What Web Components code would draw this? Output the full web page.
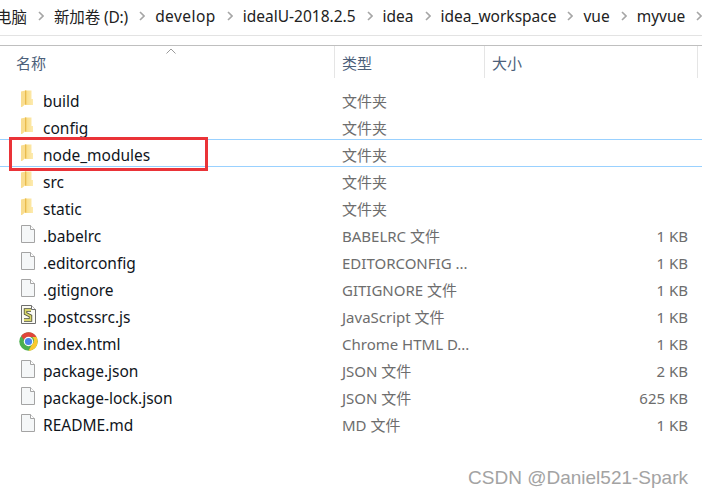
<!DOCTYPE html>
<html lang="zh">
<head>
<meta charset="utf-8">
<title>myvue</title>
<style>
  html, body { margin: 0; background: #fff; }
  body { width: 702px; height: 498px; overflow: hidden; position: relative; font-family: "Noto Sans", "Noto Sans CJK SC", sans-serif; }
</style>
</head>
<body>
<explorer-window>
  <path-bar slot="path">
    <path-crumb class="first">电脑</path-crumb>
    <path-crumb class="tight">新加卷 (D:)</path-crumb>
    <path-crumb class="wide">develop</path-crumb>
    <path-crumb>idealU-2018.2.5</path-crumb>
    <path-crumb>idea</path-crumb>
    <path-crumb>idea_workspace</path-crumb>
    <path-crumb>vue</path-crumb>
    <path-crumb>myvue</path-crumb>
  </path-bar>
  <list-header slot="header"></list-header>
  <file-row icon="folder" type="文件夹">build</file-row>
  <file-row icon="folder" type="文件夹">config</file-row>
  <file-row icon="folder" type="文件夹" focused>node_modules</file-row>
  <file-row icon="folder" type="文件夹">src</file-row>
  <file-row icon="folder" type="文件夹">static</file-row>
  <file-row icon="file" type="BABELRC 文件" size="1 KB">.babelrc</file-row>
  <file-row icon="file" type="EDITORCONFIG ..." size="1 KB">.editorconfig</file-row>
  <file-row icon="file" type="GITIGNORE 文件" size="1 KB">.gitignore</file-row>
  <file-row icon="script" type="JavaScript 文件" size="1 KB">.postcssrc.js</file-row>
  <file-row icon="chrome" type="Chrome HTML D..." size="1 KB">index.html</file-row>
  <file-row icon="file" type="JSON 文件" size="2 KB">package.json</file-row>
  <file-row icon="file" type="JSON 文件" size="625 KB">package-lock.json</file-row>
  <file-row icon="file" type="MD 文件" size="1 KB">README.md</file-row>
</explorer-window>
<red-mark></red-mark>
<water-mark>CSDN @Daniel521-Spark</water-mark>

<script>
const FONT = '"Noto Sans", "Noto Sans CJK SC", sans-serif';

class ExplorerWindow extends HTMLElement {
  connectedCallback() {
    this.attachShadow({ mode: 'open' });
    this.shadowRoot.innerHTML = `
      <style>
        :host { display: block; }
        .rows { display: flex; flex-direction: column; padding-top: 8px; }
      </style>
      <slot name="path"></slot>
      <slot name="header"></slot>
      <div class="rows"><slot></slot></div>
    `;
  }
}
customElements.define('explorer-window', ExplorerWindow);

class PathBar extends HTMLElement {
  connectedCallback() {
    this.attachShadow({ mode: 'open' });
    this.shadowRoot.innerHTML = `
      <style>
        :host {
          display: flex;
          align-items: center;
          height: 36px;
          padding-bottom: 3px;
          box-sizing: border-box;
          margin-bottom: 9px;
          border-bottom: 1px solid #e3e3e3;
          overflow: hidden;
          font: 15.500px ${FONT};
          color: #222;
          white-space: nowrap;
        }
      </style>
      <slot></slot>
    `;
  }
}
customElements.define('path-bar', PathBar);

class PathCrumb extends HTMLElement {
  connectedCallback() {
    this.attachShadow({ mode: 'open' });
    this.shadowRoot.innerHTML = `
      <style>
        :host { display: flex; align-items: center; flex: none; }
        :host(.first) { margin-left: -4px; }
        :host(.tight) { letter-spacing: -.15px; }
        :host(.wide) { letter-spacing: .45px; }
        .sep { margin: 0 10px 0 11px; flex: none; }
      </style>
      <span><slot></slot></span>
      <svg class="sep" width="6" height="10" viewBox="0 0 6 10" fill="none">
        <path d="M1 1l4 4-4 4" stroke="#a6a6a6" stroke-width="1.6"/>
      </svg>
    `;
  }
}
customElements.define('path-crumb', PathCrumb);

class ListHeader extends HTMLElement {
  connectedCallback() {
    this.attachShadow({ mode: 'open' });
    this.shadowRoot.innerHTML = `
      <style>
        :host {
          display: grid;
          grid-template-columns: 335px 150px 213px 4px;
          height: 33px;
          border-top: 1px solid #bfbfbf;
          box-sizing: border-box;
          position: relative;
          font: 15px ${FONT};
          color: #4c607a;
        }
        .col { display: flex; align-items: center; height: 32px; border-right: 1px solid #e5e5e5; box-sizing: border-box; padding-left: 7px; }
        .col.name { padding-left: 16px; }
        .col.end { border: 0; }
        svg { position: absolute; left: 165px; top: 2px; }
      </style>
      <svg width="12" height="6" viewBox="0 0 12 6" fill="none"><path d="M1.500 5.500L6 1l4.500 4.500" stroke="#9a9a9a"/></svg>
      <div class="col name">名称</div>
      <div class="col">类型</div>
      <div class="col">大小</div>
      <div class="col end"></div>
    `;
  }
}
customElements.define('list-header', ListHeader);

const ICONS = {
  folder: `<svg width="16" height="18" viewBox="0 0 16 18">
    <defs><linearGradient id="f" x1="0" x2="1" y1="0" y2="0"><stop offset="0" stop-color="#f7d675"/><stop offset="1" stop-color="#fdebb0"/></linearGradient></defs>
    <path d="M2.500 .5H11.500V9H13V15H5V.5z" fill="url(#f)"/>
    <path d="M1 1.500L5.500 .5V14L2 17H1z" fill="#f9dd90"/>
    <path d="M5 .5h1.300V14.500H5z" fill="#e9bb4e"/>
  </svg>`,
  file: `<svg width="16" height="18" viewBox="0 0 16 18" fill="none">
    <path d="M1.500 .5h9l4 4v13h-13z" fill="#f5f7f8" stroke="#a4a4a4"/>
    <path d="M10.500 .5v4h4" fill="#fff" stroke="#a4a4a4"/>
  </svg>`,
  script: `<svg width="17" height="19" viewBox="0 0 17 19" fill="none">
    <path d="M1.500 .5h10l4 4v14h-14z" fill="#fbfbf3" stroke="#6e6e6e"/>
    <path d="M11.500 .5v4h4" fill="#fff" stroke="#6e6e6e"/>
    <path d="M11 5H5.500v3.500l5 2.500v4H4" stroke="#4d4d3a" stroke-width="3.400"/>
    <path d="M11 5H5.500v3.500l5 2.500v4H4" stroke="#d9d76a" stroke-width="1.800"/>
  </svg>`,
  chrome: `<svg width="19" height="19" viewBox="0 0 19 19">
    <circle cx="9.500" cy="9.500" r="9.200" fill="#4caf50"/>
    <path d="M9.500 .3a9.200 9.200 0 0 1 8 4.700H9.500a4.500 4.500 0 0 0-4.300 3L2.200 4A9.200 9.200 0 0 1 9.500 .3z" fill="#e0453a"/>
    <path d="M17.500 5a9.200 9.200 0 0 1-8 13.700l3.900-6.900a4.500 4.500 0 0 0 0-6.800z" fill="#fbc82f"/>
    <circle cx="9.500" cy="9.500" r="4.700" fill="#fff"/>
    <circle cx="9.500" cy="9.500" r="3.600" fill="#4a84ea"/>
  </svg>`
};

class FileRow extends HTMLElement {
  connectedCallback() {
    this.attachShadow({ mode: 'open' });
    const type = this.getAttribute('type') || '';
    const size = this.getAttribute('size') || '';
    const icon = ICONS[this.getAttribute('icon')] || '';
    this.shadowRoot.innerHTML = `
      <style>
        :host {
          display: grid;
          grid-template-columns: 335px 150px 203px;
          align-items: center;
          height: 27px;
          box-sizing: border-box;
          font: 15.500px ${FONT};
          white-space: nowrap;
        }
        :host([focused]) { height: 28px; margin-top: -1px; padding-top: 1px; border-top: 1px solid #99d1ff; border-bottom: 1px solid #99d1ff; }
        .name { display: flex; align-items: center; color: #10151c; }
        .label { padding-top: 2px; }
        .icon { display: flex; justify-content: center; width: 20px; margin: -2px 5px 0 18px; }
        .type { padding: 2px 0 0 7px; color: #6d6d6d; font-size: 15px; }
        .size { padding-top: 2px; text-align: right; color: #6d6d6d; font-size: 15px; }
      </style>
      <div class="name"><span class="icon">${icon}</span><span class="label"><slot></slot></span></div>
      <div class="type">${type}</div>
      <div class="size">${size}</div>
    `;
  }
}
customElements.define('file-row', FileRow);

class RedMark extends HTMLElement {
  connectedCallback() {
    this.attachShadow({ mode: 'open' });
    this.shadowRoot.innerHTML = `
      <style>
        :host {
          position: absolute;
          left: 9px; top: 137px;
          width: 199px; height: 34px;
          box-sizing: border-box;
          border: 3px solid #ea3338;
        }
      </style>
    `;
  }
}
customElements.define('red-mark', RedMark);

class WaterMark extends HTMLElement {
  connectedCallback() {
    this.attachShadow({ mode: 'open' });
    this.shadowRoot.innerHTML = `
      <style>
        :host {
          position: absolute;
          right: 14px; top: 467px;
          font: 19px "Liberation Sans", Arial, sans-serif;
          color: #a3a3a3;
          white-space: nowrap;
        }
      </style>
      <slot></slot>
    `;
  }
}
customElements.define('water-mark', WaterMark);
</script>
</body>
</html>
